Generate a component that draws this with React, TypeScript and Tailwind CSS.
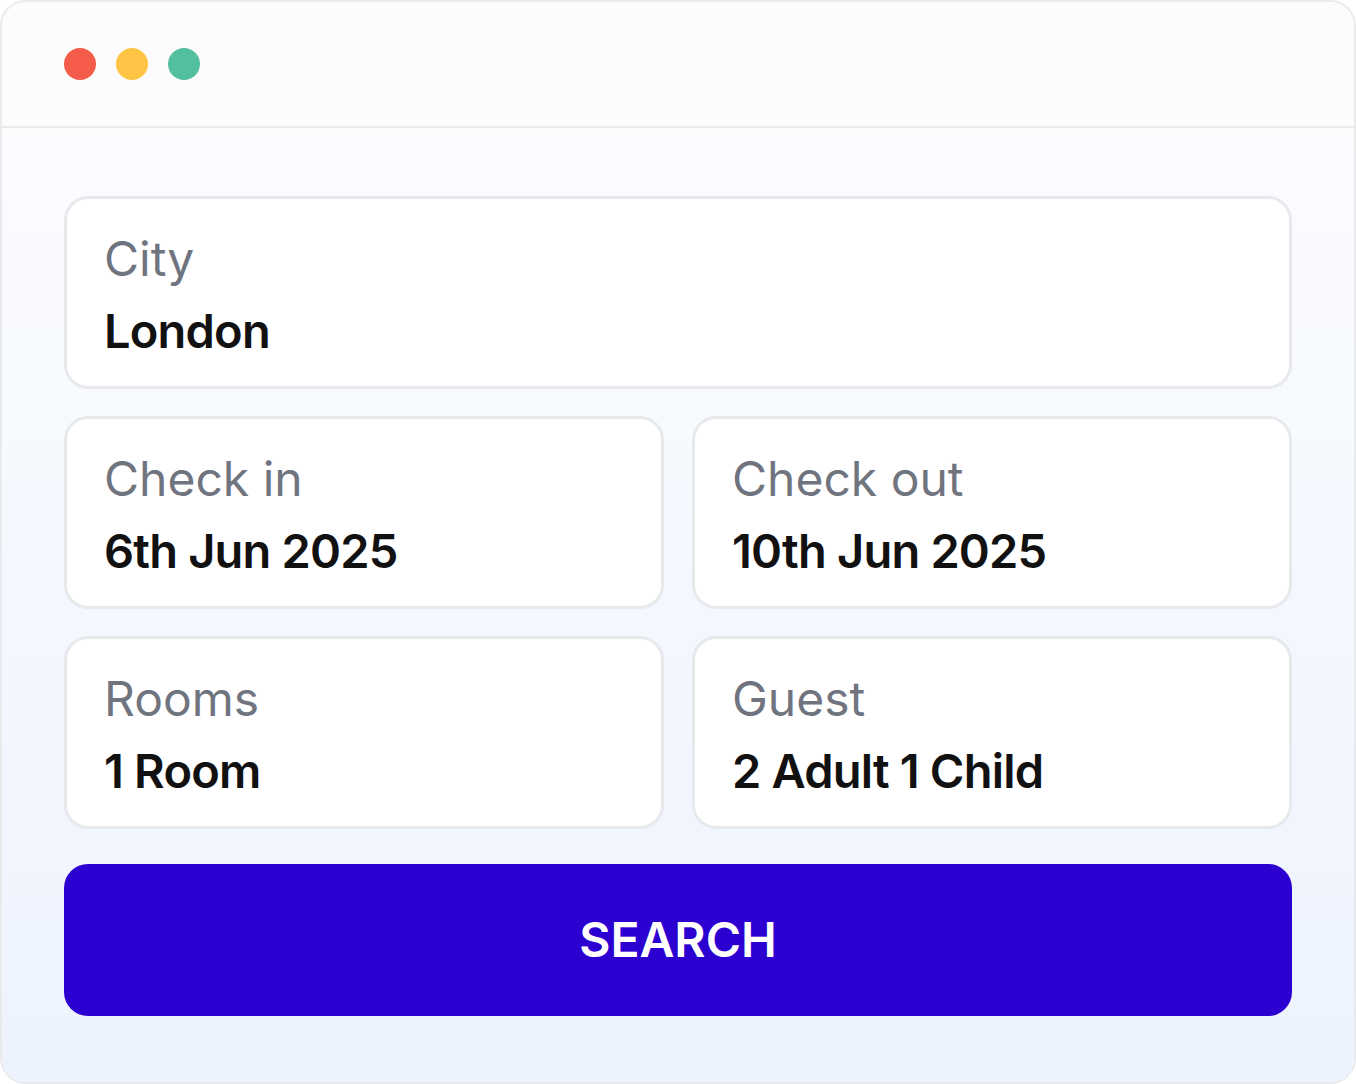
import React from 'react';

type Field = { label: string; value: string };

const rows: Field[][] = [
  [{ label: 'City', value: 'London' }],
  [
    { label: 'Check in', value: '6th Jun 2025' },
    { label: 'Check out', value: '10th Jun 2025' },
  ],
  [
    { label: 'Rooms', value: '1 Room' },
    { label: 'Guest', value: '2 Adult 1 Child' },
  ],
];

function FieldCard({ label, value }: Field) {
  return (
    <div className="flex-1 rounded-[24px] border-[3px] border-[#e8e9ec] bg-white px-[37px] pt-[32px] pb-[28px]">
      <div className="text-[48px] leading-[55px] font-normal text-[#70747f]">{label}</div>
      <div className="mt-[17px] text-[47px] leading-[55px] font-semibold text-[#111111] tracking-[-0.8px]">{value}</div>
    </div>
  );
}

export default function App() {
  return (
    <div className="w-[1356px] h-[1084px] bg-white" style={{ fontFamily: 'Inter, "Liberation Sans", sans-serif' }}>
      <div className="flex h-full flex-col overflow-hidden rounded-[26px] border-2 border-[#e9eaec]">
        {/* window title bar */}
        <div className="flex h-[126px] shrink-0 items-center gap-[20px] border-b-2 border-[#e9eaec] bg-[#fcfcfd] pl-[62px]">
          <span className="h-[32px] w-[32px] rounded-full bg-[#f65c4c]" />
          <span className="h-[32px] w-[32px] rounded-full bg-[#ffc445]" />
          <span className="h-[32px] w-[32px] rounded-full bg-[#52bf9e]" />
        </div>

        {/* booking form */}
        <div className="flex flex-1 flex-col gap-[27px] bg-gradient-to-b from-[#fbfcfe] to-[#edf3fe] px-[62px] pt-[68px]">
          {rows.map((row, i) => (
            <div key={i} className="flex gap-[28px]">
              {row.map(f => (
                <FieldCard key={f.label} {...f} />
              ))}
            </div>
          ))}
          <button className="mt-[8px] flex h-[152px] items-center justify-center rounded-[24px] bg-[#2b00d1] text-[48px] font-semibold text-white">
            SEARCH
          </button>
        </div>
      </div>
    </div>
  );
}
